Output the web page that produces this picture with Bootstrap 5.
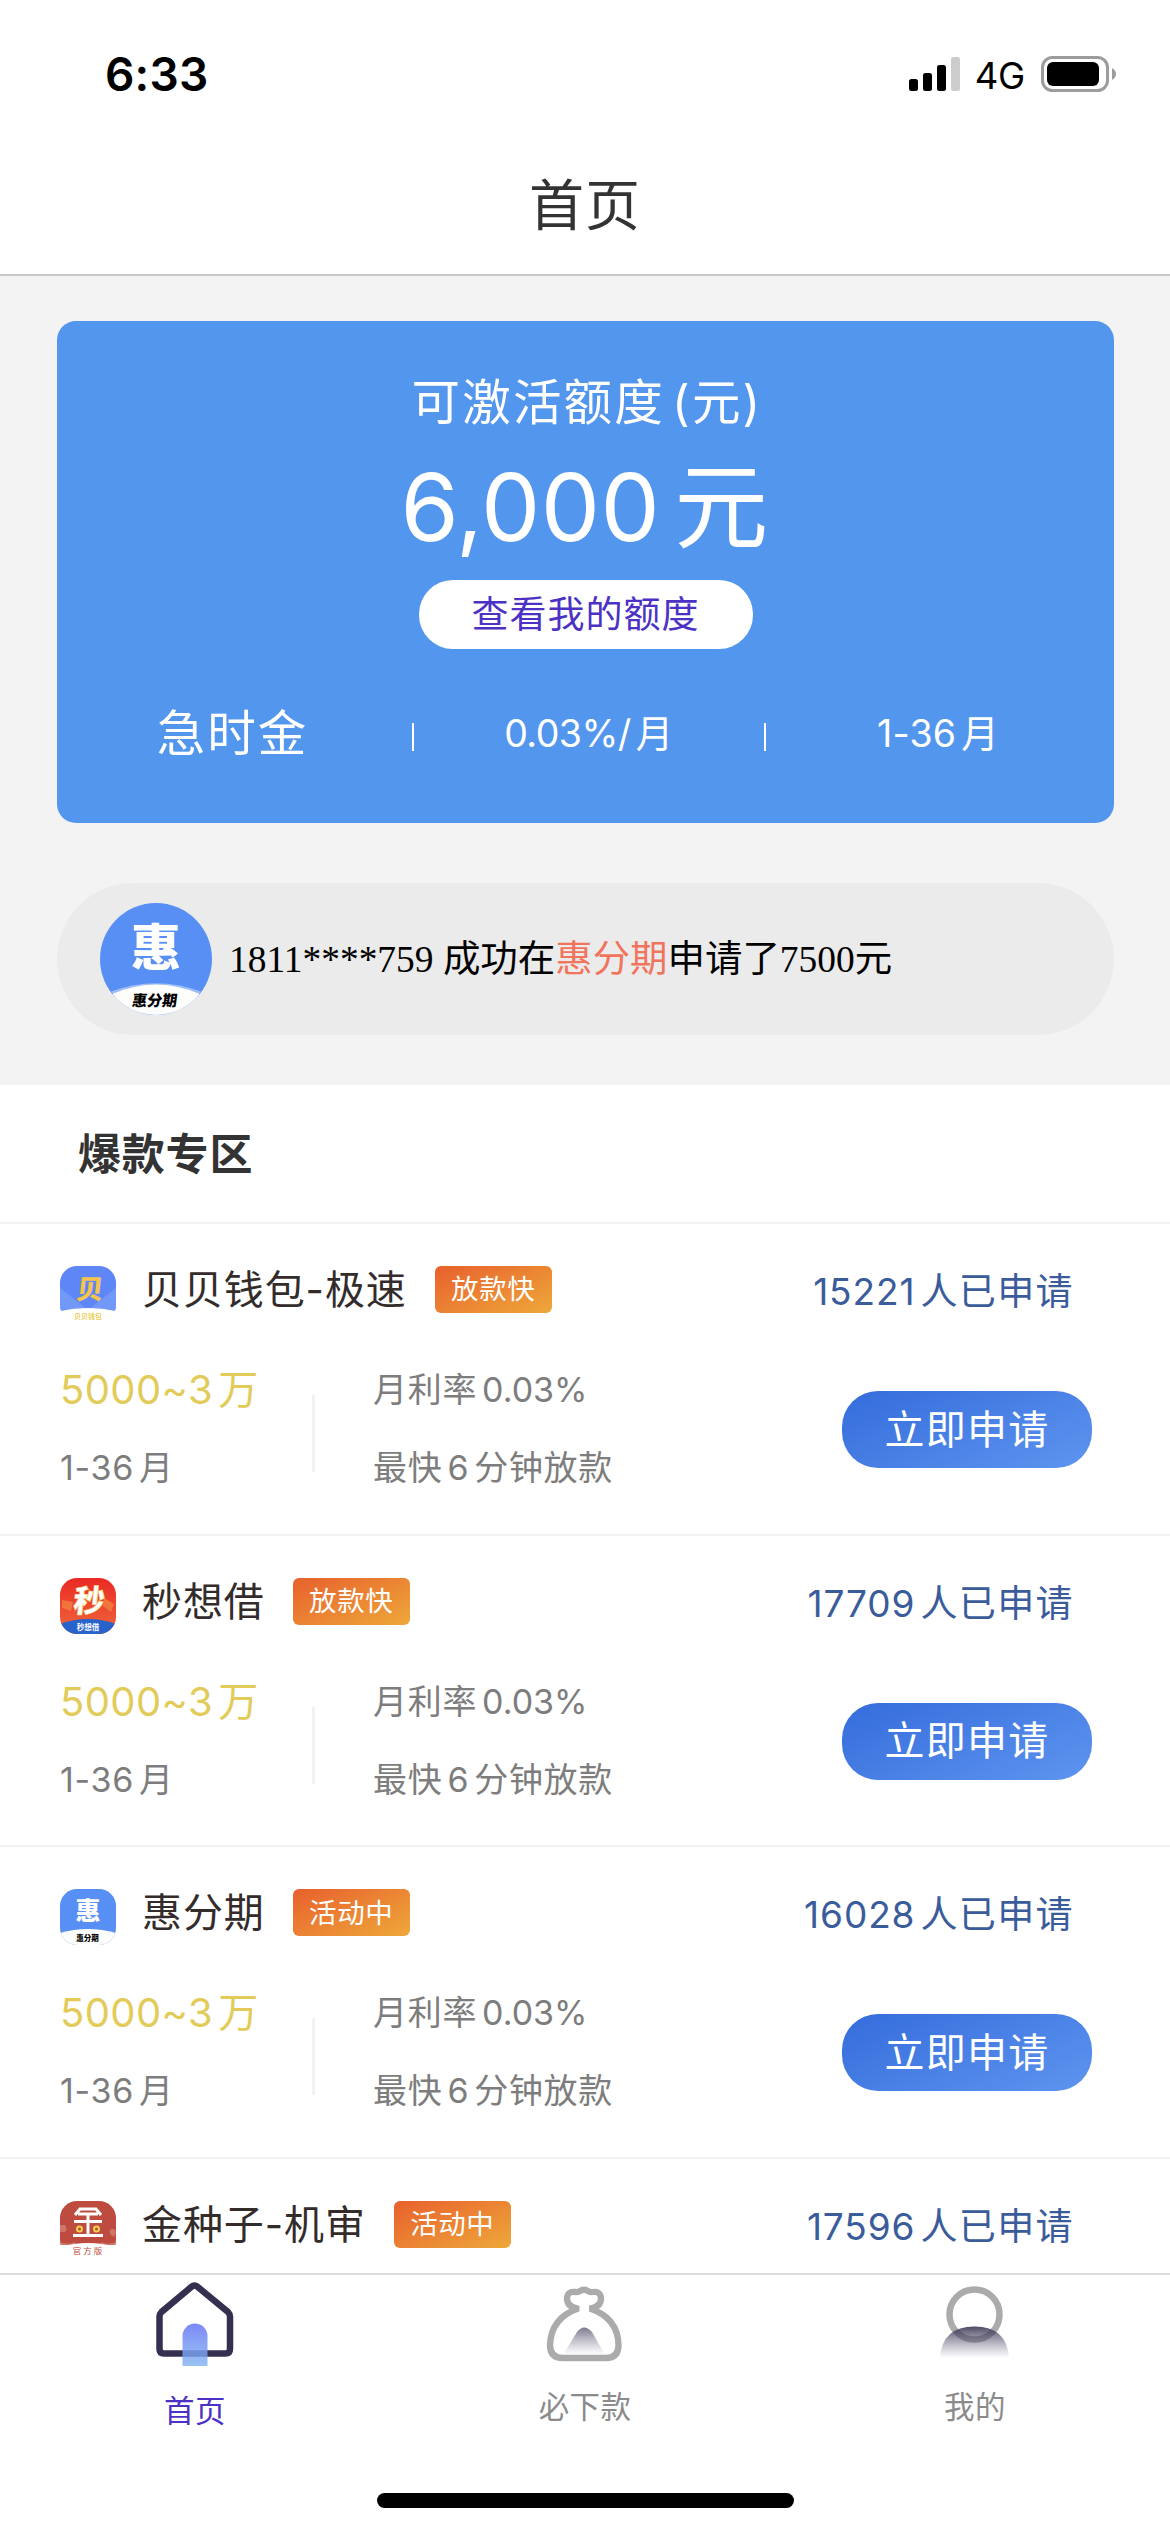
<!DOCTYPE html>
<html lang="zh-CN">
<head>
<meta charset="utf-8">
<meta name="viewport" content="width=device-width, initial-scale=1">
<title>首页</title>
<link href="https://cdn.jsdelivr.net/npm/bootstrap@5.3.0/dist/css/bootstrap.min.css" rel="stylesheet">
<style>
body{font-family:Inter,"Noto Sans CJK SC",sans-serif;background:#fff;color:#333;line-height:1}
.app{width:1170px;height:2532px;overflow:hidden}
.app svg{display:block;flex:none}
.app span,.app a,.app h1,.app h2{white-space:nowrap}
.statusbar{height:136px;padding:12px 54px 0 105px}
.clock{font-size:46px;font-weight:600;letter-spacing:.2px;color:#000}
.net{font-size:36.5px;color:#000;letter-spacing:-.3px;margin:4px 16px 0 15px}
.titlebar{height:140px;border-bottom:2px solid #c8c8c8}
.titlebar h1{font-size:55px;font-weight:400;letter-spacing:1px}
.hero{background:#f3f3f3;height:809px;padding:45px 56px 0 57px}
.quota{background:#5396ed;border-radius:19px;height:502px;color:#fff;border:0}
.quota-label{font-size:48.5px;letter-spacing:2.2px;height:56px;margin-top:54px;padding-left:3px}
.quota-sum{font-size:94px;letter-spacing:.4px;height:100px;margin-top:26px;padding-right:2px}
.quota-btn{width:334px;height:69px;margin-top:23px;background:#fff;color:#4c32c4;font-size:37px;letter-spacing:1px;border:0;border-radius:34px;line-height:1}
.quota-facts{height:60px;margin-top:55px}
.f1{width:355px;padding-right:4px;font-size:48.5px;letter-spacing:2px}
.f2{width:350px;font-size:37.5px;letter-spacing:-.5px;padding-right:1px}
.f3{flex:1;font-size:37.5px;letter-spacing:.2px;padding-right:4px}
.bar{width:2px;height:28px;background:#fff;margin-top:5px}
.notice{height:152px;margin-top:60px;border-radius:76px;background:#ebebeb;padding-left:43px;gap:17px;color:#000;font-family:"Liberation Serif","Noto Sans CJK SC",serif;font-size:37.45px}
.notice>span{padding-top:2px}
.notice b{font-weight:400;color:#f1745d}
.sect{height:139px;padding:2px 0 0 78px;border-bottom:2px solid #f2f2f2}
.sect h2{font-size:43px;font-weight:700;letter-spacing:.8px}
.loan{height:311.7px;border-bottom:2px solid #f2f2f2;padding:42px 78px 0 60px}
.loans{height:1049px;overflow:hidden}
.top{height:56px}
.pname{font-size:40px;letter-spacing:.9px;color:#332c2b;margin-left:26px;height:48px}
.pill{width:117px;height:47px;margin-left:28px;border-radius:6px;background:linear-gradient(155deg,#e8602d,#eea83a);color:#fff;font-size:27.5px;letter-spacing:.6px;padding-top:1px}
.cnt{color:#3b5c9b;font-size:37px;letter-spacing:.9px;height:51px;margin-left:auto;padding-right:18px}
.cnt .g{letter-spacing:1.4px}
.mid{height:126px;margin-top:44px;font-size:34px;color:#7d7d7d;letter-spacing:.7px}
.c1{width:252px}
.c1 .amt{font-size:40px;color:#e2cb59;letter-spacing:.4px}
.vr3{width:3px;height:77px;background:#f2f2f2;margin-top:29px}
.c2{margin-left:58px}
.c2 .pct{letter-spacing:0}
.ln{height:48px;display:flex;align-items:center}
.apply{width:250px;height:77px;margin:25px 0 0 auto;border-radius:36px;border:0;background:linear-gradient(155deg,#346cdb,#5e95f0);color:#fff;font-size:40px;letter-spacing:1.2px;line-height:1;padding:0}
.g{margin-left:5px}
.tabs{height:258px;border-top:2px solid #dcdcdc;background:#fff}
.tabs a{width:390px;font-size:30.5px;color:#8b8b8b;text-decoration:none;letter-spacing:.4px}
.tabs a.on{color:#4c32c4}
.tabs svg{margin-bottom:17px}
.tabs a.on svg{margin-bottom:21px}
.homebar{width:417px;height:15px;border-radius:8px;background:#000;margin-bottom:23px}
svg text{font-family:"Noto Sans CJK SC",sans-serif}
</style>
<script src="https://cdn.jsdelivr.net/npm/bootstrap@5.3.0/dist/js/bootstrap.bundle.min.js"></script>
</head>
<body>
<svg width="0" height="0" class="position-absolute">
  <defs>
    <clipPath id="rr"><rect width="56" height="56" rx="17"/></clipPath>
    <linearGradient id="door" x2="0" y2="1"><stop stop-color="#7d87f7"/><stop offset="1" stop-color="#79aef0" stop-opacity=".75"/></linearGradient>
    <linearGradient id="fade" x2="0" y2="1"><stop stop-color="#34304f" stop-opacity=".65"/><stop offset="1" stop-color="#6a6784" stop-opacity="0"/></linearGradient>
    <linearGradient id="fade2" x2="0" y2="1"><stop stop-color="#34304f" stop-opacity=".88"/><stop offset="1" stop-color="#6a6784" stop-opacity="0"/></linearGradient>
    <linearGradient id="redg" x2="0" y2="1"><stop stop-color="#ea2a25"/><stop offset="1" stop-color="#f0673a"/></linearGradient>
  </defs>
</svg>
<main class="app d-flex flex-column">
  <header class="flex-shrink-0">
    <div class="statusbar d-flex align-items-center">
      <span class="clock">6:33</span>
      <svg class="ms-auto" width="51" height="34" viewBox="0 0 51 34"><rect y="22" width="9" height="12" rx="2.5"/><rect x="14" y="16" width="9" height="18" rx="2.5"/><rect x="28" y="8" width="9" height="26" rx="2.5"/><rect x="42" width="9" height="34" rx="2.5" fill="#ccc"/></svg>
      <span class="net">4G</span>
      <svg width="75" height="36" viewBox="0 0 75 36"><rect x="1.5" y="1.5" width="65" height="33" rx="10" fill="none" stroke="#9c9c9c" stroke-width="3"/><rect x="6" y="6" width="52" height="24" rx="6"/><path d="M71 12q4 2.500 4 6t-4 6z" fill="#9c9c9c"/></svg>
    </div>
    <div class="titlebar d-flex align-items-center justify-content-center"><h1 class="m-0">首页</h1></div>
  </header>

  <section class="hero flex-shrink-0">
    <div class="quota card align-items-center">
      <div class="quota-label d-flex align-items-center"><span>可激活额度<span style="margin-left:7px">(元)</span></span></div>
      <div class="quota-sum d-flex align-items-center"><span>6,000<span style="margin-left:14px">元</span></span></div>
      <button class="quota-btn btn">查看我的额度</button>
      <div class="quota-facts d-flex align-items-center w-100">
        <span class="f1 text-center">急时金</span><i class="bar"></i>
        <span class="f2 text-center">0.03%/<span class="g">月</span></span><i class="bar"></i>
        <span class="f3 text-center">1-36<span class="g">月</span></span>
      </div>
    </div>
    <div class="notice d-flex align-items-center">
      <svg width="112" height="112" viewBox="0 0 112 112"><circle cx="56" cy="56" r="56" fill="#588ff5"/><path d="M11 88.500Q56 72 101 88.500A56 56 0 0 1 11 88.500z" fill="#9cbdf8"/><path d="M12.300 91Q56 72 99.700 91A56 56 0 0 1 12.300 91z" fill="#fdfdfb"/><text x="56" y="63" font-size="50" font-weight="900" text-anchor="middle" fill="#fff">惠</text><text transform="translate(54 103) skewX(-8)" font-size="15" font-weight="900" text-anchor="middle" fill="#000">惠分期</text></svg>
      <span>1811****759 成功在<b>惠分期</b>申请了7500元</span>
    </div>
  </section>

  <div class="sect d-flex align-items-center flex-shrink-0"><h2 class="m-0">爆款专区</h2></div>

  <section class="loans flex-shrink-0">
    <article class="loan">
      <div class="top d-flex">
        <svg width="56" height="56" viewBox="0 0 56 56"><g clip-path="url(#rr)"><path fill="#5f86f7" d="M0 0h56v45H0z"/><path d="M0 22l18 14 10 8H0zM56 22L38 36l-10 8h28z" fill="#7299f8"/><path d="M0 45q28-6 56 0v11H0z" fill="#fff"/></g><text transform="translate(29 33) skewX(-6)" font-size="27" font-weight="900" text-anchor="middle" fill="#f4c44c">贝</text><text x="28" y="53" font-size="7" font-weight="700" text-anchor="middle" fill="#edcf5d">贝贝钱包</text></svg>
        <span class="pname d-flex align-items-center">贝贝钱包-极速</span><span class="pill d-flex align-items-center justify-content-center">放款快</span>
        <span class="cnt d-flex align-items-center">15221<span class="g">人已申请</span></span>
      </div>
      <div class="mid d-flex">
        <div class="c1 d-flex flex-column justify-content-between"><div class="ln amt">5000~3<span class="g">万</span></div><div class="ln">1-36<span class="g">月</span></div></div>
        <i class="vr3"></i>
        <div class="c2 d-flex flex-column justify-content-between"><div class="ln">月利率<span class="g pct">0.03%</span></div><div class="ln">最快<span class="g">6</span><span class="g">分钟放款</span></div></div>
        <button class="apply btn">立即申请</button>
      </div>
    </article>
    <article class="loan">
      <div class="top d-flex">
        <svg width="56" height="56" viewBox="0 0 56 56"><g clip-path="url(#rr)"><path fill="url(#redg)" d="M0 0h56v56H0z"/><path d="M2 22l11 2-2 9-9-3zM44 20l10 6-3 8-8-6z" fill="#f1743c"/><path d="M0 46Q28 36 56 46v10H0z" fill="#2862cb"/></g><text transform="translate(28 34) skewX(-6)" font-size="31" font-weight="900" text-anchor="middle" fill="#fff" stroke="#f7d77a" stroke-width=".6">秒</text><text x="28" y="52" font-size="7.500" font-weight="700" text-anchor="middle" fill="#fff">秒想借</text></svg>
        <span class="pname d-flex align-items-center">秒想借</span><span class="pill d-flex align-items-center justify-content-center">放款快</span>
        <span class="cnt d-flex align-items-center">17709<span class="g">人已申请</span></span>
      </div>
      <div class="mid d-flex">
        <div class="c1 d-flex flex-column justify-content-between"><div class="ln amt">5000~3<span class="g">万</span></div><div class="ln">1-36<span class="g">月</span></div></div>
        <i class="vr3"></i>
        <div class="c2 d-flex flex-column justify-content-between"><div class="ln">月利率<span class="g pct">0.03%</span></div><div class="ln">最快<span class="g">6</span><span class="g">分钟放款</span></div></div>
        <button class="apply btn">立即申请</button>
      </div>
    </article>
    <article class="loan">
      <div class="top d-flex">
        <svg width="56" height="56" viewBox="0 0 56 56"><g clip-path="url(#rr)"><path fill="#588ff5" d="M0 0h56v56H0z"/><path d="M0 44Q28 36 56 44v12H0z" fill="#fdfdfb"/></g><text x="28" y="31" font-size="25" font-weight="900" text-anchor="middle" fill="#fff">惠</text><text x="27.500" y="52" font-size="7.500" font-weight="900" text-anchor="middle" fill="#000">惠分期</text></svg>
        <span class="pname d-flex align-items-center">惠分期</span><span class="pill d-flex align-items-center justify-content-center">活动中</span>
        <span class="cnt d-flex align-items-center">16028<span class="g">人已申请</span></span>
      </div>
      <div class="mid d-flex">
        <div class="c1 d-flex flex-column justify-content-between"><div class="ln amt">5000~3<span class="g">万</span></div><div class="ln">1-36<span class="g">月</span></div></div>
        <i class="vr3"></i>
        <div class="c2 d-flex flex-column justify-content-between"><div class="ln">月利率<span class="g pct">0.03%</span></div><div class="ln">最快<span class="g">6</span><span class="g">分钟放款</span></div></div>
        <button class="apply btn">立即申请</button>
      </div>
    </article>
    <article class="loan">
      <div class="top d-flex">
        <svg width="56" height="56" viewBox="0 0 56 56"><g clip-path="url(#rr)"><path fill="#bd4b40" d="M0 0h56v44H0z"/><path d="M0 24h5q3 4 0 7H0zM50 29q5-3 6 3l-2 4q-5-2-4-7zM0 41q10 3 14 0l4 3H0zM56 41q-10 3-14 0l-4 3h18z" fill="#cf7467"/><path d="M0 46Q28 38 56 46v12H0z" fill="#fff"/><g fill="none" stroke="#fff" stroke-width="3"><path d="M15 14l5-6h16l5 6M18 13h20M14 20.500h28M28 13v21M13 34.500h30"/></g><g fill="#bd4b40" stroke="#f3d14f" stroke-width="2"><circle cx="19.500" cy="28" r="2.500"/><circle cx="36.500" cy="28" r="2.500"/></g></g><text x="28.500" y="53" font-size="8.500" letter-spacing="2" text-anchor="middle" fill="#bd4b40">官方版</text></svg>
        <span class="pname d-flex align-items-center">金种子-机审</span><span class="pill d-flex align-items-center justify-content-center">活动中</span>
        <span class="cnt d-flex align-items-center">17596<span class="g">人已申请</span></span>
      </div>
    </article>
  </section>

  <footer class="tabs flex-shrink-0 d-flex flex-column align-items-center">
    <nav class="d-flex">
      <a class="on d-flex flex-column align-items-center" href="#"><svg width="90" height="100" viewBox="0 0 90 100"><path d="M44.500 10.500q-1.500 0-3 1.300L11.500 37q-2 2-2 4.500V74q0 4.500 4.500 4.500h61.500q4.500 0 4.500-4.500V41.500q0-2.500-2-4.500L47.500 11.800q-1.500-1.300-3-1.300z" fill="none" stroke="#34304f" stroke-width="6.500"/><path d="M32.500 91V61a12.500 12.500 0 0 1 25 0v30z" fill="url(#door)"/></svg><span>首页</span></a>
      <a class="d-flex flex-column align-items-center" href="#"><svg width="90" height="100" viewBox="0 0 90 100"><path d="M38 33.500Q27.500 32 27 24Q27 16 35 17Q38.500 17.500 40 16Q44 13.500 48 16Q49.500 17.500 53 17Q61 16 61 24Q60.500 32 50 33.500Q78 43 78.500 70Q78.500 83 66 83H23Q10 83 10 70Q11 43 38 33.500z" fill="none" stroke="#acabab" stroke-width="6.300" stroke-linejoin="round"/><path d="M39.500 33.500h9.500" stroke="#fff" stroke-width="9"/><path d="M23 80l14-23q7-9 15 0l13 23z" fill="url(#fade)"/></svg><span>必下款</span></a>
      <a class="d-flex flex-column align-items-center" href="#"><svg width="90" height="100" viewBox="0 0 90 100"><circle cx="44.500" cy="39.500" r="25" fill="none" stroke="#acabab" stroke-width="6.500"/><path d="M10 83q2-31.500 34.500-31.500T79 83z" fill="url(#fade2)"/></svg><span>我的</span></a>
    </nav>
    <div class="homebar mt-auto"></div>
  </footer>
</main>
</body>
</html>
